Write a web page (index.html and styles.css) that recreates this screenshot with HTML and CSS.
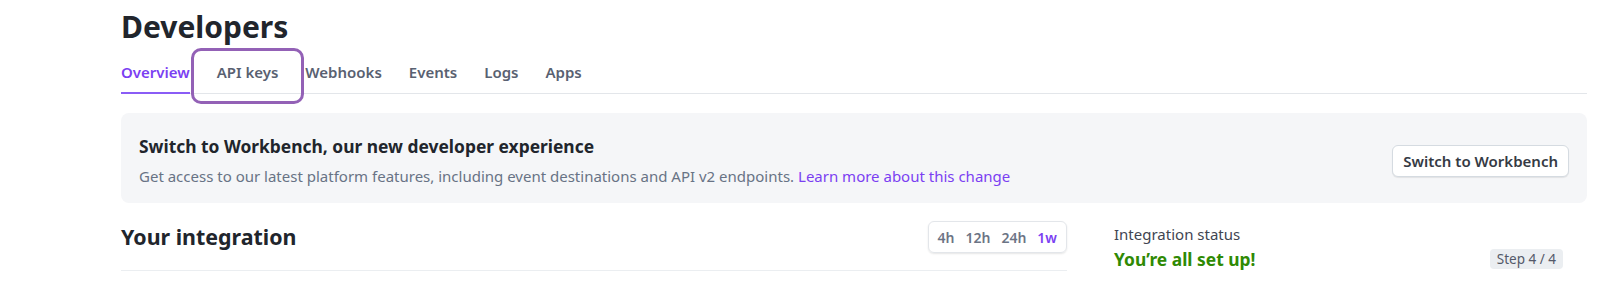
FILE: index.html
```html
<!DOCTYPE html>
<html>
<head>
    <title>Developers</title>
    <link rel="stylesheet" href="styles.css">
</head>
<body>
    <div class="page">
        <h1 class="title">Developers</h1>
        <nav class="tabs">
            <a class="tab active" href="#">Overview</a>
            <a class="tab" href="#">API keys<span class="highlight"></span></a>
            <a class="tab" href="#">Webhooks</a>
            <a class="tab" href="#">Events</a>
            <a class="tab" href="#">Logs</a>
            <a class="tab" href="#">Apps</a>
        </nav>

        <div class="banner">
            <div class="banner-text">
                <h2>Switch to Workbench, our new developer experience</h2>
                <p>Get access to our latest platform features, including event destinations and API v2 endpoints. <a href="#">Learn more about this change</a></p>
            </div>
            <button class="btn">Switch to Workbench</button>
        </div>

        <div class="overview">
            <div class="integration">
                <div class="integration-head">
                    <h2>Your integration</h2>
                    <div class="range">
                        <span>4h</span>
                        <span>12h</span>
                        <span>24h</span>
                        <span class="selected">1w</span>
                    </div>
                </div>
            </div>
            <div class="status">
                <div class="status-label">Integration status</div>
                <div class="status-row">
                    <span class="status-ok">You’re all set up!</span>
                    <span class="step">Step 4 / 4</span>
                </div>
            </div>
        </div>
    </div>
</body>
</html>
```

FILE: styles.css
```css
body {
    margin: 0;
    padding: 0;
    background-color: #fff;
    font-family: "Noto Sans", "Open Sans", sans-serif;
    color: #353a44;
}

.page {
    padding: 9px 32px 0 121px;
}

.title {
    margin: 0;
    font-size: 30px;
    line-height: 36px;
    font-weight: 700;
    color: #21252c;
}

.tabs {
    display: flex;
    gap: 27px;
    margin-top: 17px;
    border-bottom: 1px solid #e3e6ea;
}

.tab {
    position: relative;
    padding-bottom: 10px;
    margin-bottom: -1px;
    border-bottom: 2px solid transparent;
    font-size: 15px;
    line-height: 20px;
    font-weight: 600;
    color: #596171;
    text-decoration: none;
}

.tab.active {
    color: #7b3ff2;
    border-bottom-color: #8a5cf6;
}

.highlight {
    position: absolute;
    left: -26px;
    right: -26px;
    top: -14px;
    bottom: -12px;
    border: 3px solid #9361b6;
    border-radius: 10px;
}

.banner {
    display: flex;
    align-items: center;
    justify-content: space-between;
    margin-top: 19px;
    padding: 21px 18px 16px 18px;
    background-color: #f5f6f8;
    border-radius: 8px;
}

.banner-text h2 {
    margin: 0;
    font-size: 17.4px;
    line-height: 24px;
    font-weight: 700;
    color: #21252c;
}

.banner-text p {
    margin: 8px 0 0;
    font-size: 15px;
    line-height: 21px;
    color: #687385;
}

.banner-text a {
    color: #7b3ff2;
    text-decoration: none;
}

.btn {
    height: 32px;
    padding: 0 10px;
    background-color: #fff;
    border: 1px solid #d5dbe1;
    border-radius: 6px;
    box-shadow: 0 1px 1px rgba(0, 0, 0, 0.08);
    font-family: inherit;
    font-size: 15px;
    font-weight: 600;
    color: #353a44;
    cursor: pointer;
}

.overview {
    display: grid;
    grid-template-columns: 1fr 473px;
    column-gap: 47px;
    margin-top: 18px;
}

.integration-head {
    display: flex;
    align-items: center;
    justify-content: space-between;
    padding-bottom: 17px;
    border-bottom: 1px solid #ebeef1;
}

.integration-head h2 {
    margin: 0;
    font-size: 21.4px;
    line-height: 28px;
    font-weight: 700;
    color: #21252c;
}

.range {
    display: flex;
    align-items: center;
    gap: 11px;
    height: 30px;
    padding: 0 9px;
    border: 1px solid #e3e6ea;
    border-radius: 6px;
    box-shadow: 0 1px 2px rgba(0, 0, 0, 0.1);
    font-size: 14px;
    font-weight: 600;
    color: #6c7485;
}

.range .selected {
    color: #7b3ff2;
}

.status {
    padding: 3px 24px 0 0;
}

.status-label {
    font-size: 15px;
    line-height: 20px;
    color: #414552;
}

.status-row {
    display: flex;
    align-items: center;
    justify-content: space-between;
    margin-top: 3px;
}

.status-ok {
    font-size: 17.4px;
    line-height: 24px;
    font-weight: 700;
    color: #2f8a04;
}

.step {
    padding: 1px 7px;
    background-color: #ebeef1;
    border-radius: 4px;
    font-size: 13.5px;
    line-height: 18px;
    color: #545969;
}
```
